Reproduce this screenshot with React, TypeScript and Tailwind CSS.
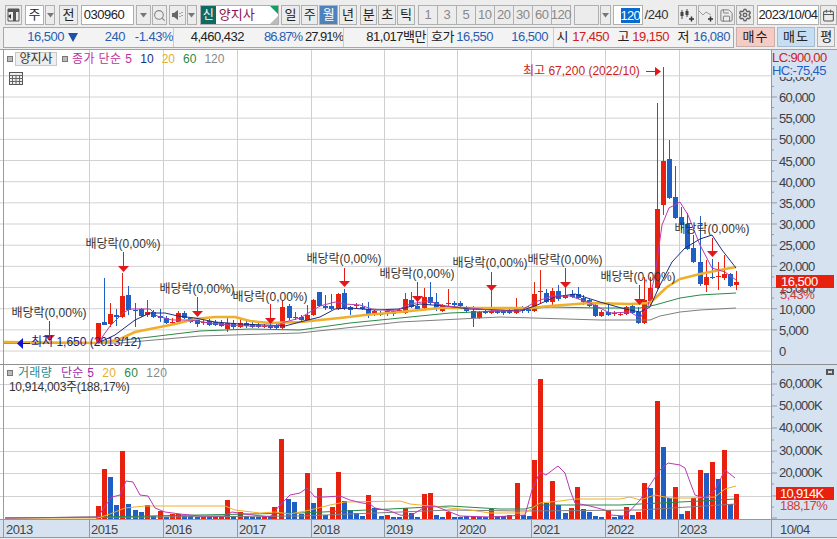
import { Search, Save, Settings, Calendar } from 'lucide-react';
import type { ReactNode } from 'react';

// [x, color, bodyTop, bodyBottom, wickTop, wickBottom]
type Candle = [number, 'r' | 'b', number, number, number, number];

const candles: Candle[] = [
  [98,'r',323,343,323,343],[104,'b',322,325,278,325],[110,'r',314,324,303,327],[116,'b',315,317,309,326],
  [122,'r',296,317,273,318],[128,'b',295,310,286,315],[135,'b',310,311,303,327],[141,'b',309,316,308,317],
  [147,'r',312,315,300,317],[153,'b',312,317,310,318],[160,'b',316,318,309,322],[166,'b',318,323,316,324],
  [172,'r',322,323,318,325],[178,'r',313,322,311,323],[184,'b',313,318,311,319],[190,'b',318,322,317,323],
  [197,'b',320,324,318,327],[203,'r',322,323,320,325],[209,'b',321,325,319,326],[215,'b',322,325,320,326],
  [221,'b',323,326,320,327],[227,'r',323,329,317,332],[233,'b',323,327,320,329],[240,'r',323,327,318,328],
  [246,'b',323,326,321,328],[252,'b',324,327,322,328],[258,'b',325,327,323,328],[264,'r',326,327,324,328],
  [270,'b',326,328,324,329],[276,'b',326,328,324,329],[282,'r',307,328,300,329],[289,'b',306,318,304,320],
  [295,'r',317,318,312,320],[301,'b',317,320,315,321],[307,'r',315,320,305,321],[313,'r',300,315,299,316],
  [319,'b',292,306,292,307],[325,'b',306,308,295,310],[331,'b',306,309,294,310],[338,'r',294,309,293,310],
  [344,'b',293,308,289,310],[350,'b',307,310,306,315],[356,'r',305,306,303,309],[362,'b',307,309,303,310],
  [368,'b',309,315,302,318],[374,'r',311,315,310,316],[380,'b',313,315,311,316],[387,'r',311,314,310,316],
  [393,'b',311,314,310,316],[399,'r',310,312,308,313],[405,'r',299,313,293,314],[411,'b',300,307,292,308],
  [417,'b',306,309,296,310],[424,'r',297,308,288,309],[430,'b',297,303,282,305],[436,'b',302,309,293,311],
  [442,'r',305,311,304,312],[448,'r',303,304,289,307],[454,'b',303,305,301,307],[460,'b',303,306,301,308],
  [466,'b',308,311,306,313],[473,'b',311,318,306,327],[479,'r',312,318,311,319],[485,'b',311,313,310,314],
  [491,'r',311,313,290,314],[497,'b',311,313,310,314],[503,'b',311,313,310,315],[509,'b',311,313,309,314],
  [516,'r',307,313,298,314],[522,'b',308,311,306,313],[528,'b',309,311,306,313],[534,'r',294,311,282,312],
  [540,'r',291,292,270,303],[546,'b',293,302,289,303],[552,'r',291,302,288,305],[558,'b',291,299,285,301],
  [565,'r',295,298,287,299],[572,'b',294,297,290,298],[578,'b',294,298,287,299],[583,'b',298,302,295,305],
  [589,'b',300,306,299,307],[595,'b',305,316,304,317],[601,'r',312,316,310,317],[608,'b',312,315,302,316],
  [614,'r',313,314,311,316],[620,'r',314,315,312,316],[626,'r',307,314,306,315],[632,'b',306,313,304,314],
  [638,'b',312,323,307,324],[644,'r',300,323,277,324],[650,'r',288,301,277,305],[657,'r',209,288,103,289],
  [663,'r',161,205,67,215],[669,'b',159,198,140,199],[675,'b',197,218,166,219],[681,'b',217,225,207,230],
  [687,'b',224,249,213,250],[693,'b',248,262,235,263],[700,'b',262,284,216,286],[706,'r',277,285,260,292],
  [712,'b',277,278,259,279],[718,'r',276,277,262,290],[724,'r',274,278,255,280],[730,'b',274,286,273,287],
  [736,'r',282,285,271,290],
];

const ma5 = '98,343 110,326 118,318 123,313 130,309 136,309 150,309 157,316 172,320 190,320 210,323 230,325 250,326 275,326 285,322 300,318 320,306 335,302 345,304 360,305 372,309 395,311 410,304 428,301 445,306 470,308 500,311 520,311 535,302 552,296 570,296 590,303 610,313 630,312 640,318 648,306 655,275 662,225 669,208 680,202 688,215 700,245 712,268 725,272 736,280';
const ma10 = '98,343 115,335 135,320 150,313 165,313 178,316 195,318 215,322 240,324 265,325 285,326 300,322 320,317 335,309 350,308 375,310 400,309 420,304 445,306 470,309 500,310 520,311 535,306 555,297 575,294 600,302 625,309 640,312 650,307 660,285 672,262 685,248 700,239 712,235 722,250 736,268';
const ma20 = '4,342 98,343 118,340 135,332 155,328 175,324 195,319 215,317 235,317 250,321 270,323 300,322 320,320 340,318 365,315 400,312 440,308 470,308 500,308 530,308 550,306 590,303 630,304 650,303 667,287 680,279 700,274 720,270 736,267';
const ma60 = '4,343 98,343 150,337 200,331 250,329 300,330 350,323 400,318 450,313 500,311 550,307 600,308 640,308 655,305 680,298 700,295 736,293';
const ma120 = '4,343 120,343 200,336 300,333 400,322 500,317 600,320 650,320 660,316 680,312 700,310 736,308';

// [x, color, top]
const bars: [number, 'r' | 'b', number][] = [
  [98,'r',506],[104,'r',469],[110,'b',477],[116,'b',505],[122,'r',451],[128,'b',504],[135,'b',510],[141,'b',512],
  [147,'r',505],[153,'b',516],[160,'r',511],[166,'b',517],[172,'r',514],[178,'r',514],[184,'b',516],[190,'b',516],
  [197,'b',517],[203,'r',517],[209,'b',517],[215,'r',517],[221,'r',516],[227,'r',500],[233,'b',516],[240,'r',512],
  [246,'b',516],[252,'b',517],[258,'b',517],[264,'r',516],[270,'b',516],[274,'r',507],[281,'r',439],[288,'b',499],
  [294,'b',502],[301,'b',514],[307,'r',473],[313,'b',503],[319,'r',488],[325,'b',515],[332,'r',507],[338,'r',472],
  [344,'b',501],[350,'b',510],[356,'b',513],[362,'b',516],[368,'r',495],[374,'b',508],[381,'b',516],[387,'r',515],
  [393,'b',517],[399,'b',517],[405,'r',508],[411,'b',513],[417,'b',517],[424,'r',494],[430,'r',493],[436,'b',515],
  [442,'b',517],[448,'r',512],[454,'b',517],[460,'b',517],[466,'b',516],[473,'r',516],[479,'b',517],[485,'b',517],
  [491,'r',509],[497,'b',516],[503,'b',516],[509,'r',515],[517,'r',483],[523,'b',515],[529,'b',516],[534,'r',460],
  [540,'r',379],[546,'b',503],[552,'r',481],[558,'b',505],[565,'b',513],[571,'r',508],[577,'r',487],[583,'b',509],
  [589,'b',512],[595,'b',516],[601,'b',517],[608,'r',510],[614,'b',517],[620,'b',516],[626,'r',507],[632,'b',515],
  [638,'r',512],[644,'r',483],[650,'b',488],[657,'r',401],[663,'b',447],[669,'b',498],[675,'r',487],[681,'b',514],
  [687,'r',511],[693,'r',498],[700,'r',470],[706,'b',473],[712,'r',462],[718,'b',479],[724,'r',450],[730,'b',504],
  [736,'r',494],
];

const vol5 = '5,518 98,517 105,506 112,497 120,495 126,481 133,482 140,495 148,496 155,508 165,512 180,514 200,516 224,516 232,512 245,514 270,517 280,505 290,495 300,493 307,488 315,497 325,497 340,496 350,500 362,503 370,504 375,508 390,511 400,515 410,516 425,507 435,506 445,510 460,516 490,517 509,516 525,515 532,490 540,472 546,475 558,466 565,473 570,490 575,503 590,506 605,510 610,515 625,516 640,500 650,485 660,470 668,463 680,465 685,468 690,482 695,495 705,498 715,490 725,470 735,478';
const vol20 = '5,518 98,518 110,514 125,508 145,506 225,506 235,510 260,513 275,512 290,514 310,510 330,505 345,502 400,501 410,504 440,507 470,510 490,513 510,513 525,513 540,503 560,501 575,499 620,499 630,497 640,500 655,495 670,498 690,498 715,497 725,489 736,486';
const vol60 = '5,518 98,517 300,513 390,509 450,506 500,509 525,509 540,505 620,505 660,503 700,501 736,499';
const vol120 = '5,518 300,516 400,512 450,510 520,511 640,510 736,504';

// [label center x, label center y, arrow x, shaft top, head top]
const dividends = [
  [49,313,49,321,335],[123,244,123,252,266],[197,289,197,297,311],[270,297,270,304,318],[344,259,344,268,281],
  [417,274,417,282,296],[490,263,491,272,285],[565,260,565,268,282],[638,277,639,285,299],[712,229,712,238,251],
];

const yearLines = [89, 163, 237, 311, 384, 457, 531, 605, 679];
const years = ['2015', '2016', '2017', '2018', '2019', '2020', '2021', '2022', '2023'];
const priceLabels = ['60,000','55,000','50,000','45,000','40,000','35,000','30,000','25,000','20,000','15,000','10,000','5,000','0'];
const priceY = (i: number) => 97 + i * 21.17;
const volLabels = ['60,000K','50,000K','40,000K','30,000K','20,000K'];
const volY = [384, 406, 428, 451, 473, 496];

const RED = '#e8210e';
const BLUE = '#1f5fc4';

const ToolBtn = ({ children, className = '', tone = 'bg-[#ececec] text-[#222]' }: { children?: ReactNode; className?: string; tone?: string }) => (
  <div className={`flex h-[20px] items-center justify-center border border-[#b0b0b0] text-[13px] ${tone} ${className}`}>
    {children}
  </div>
);

const Arrow = () => (
  <svg width="7" height="5" viewBox="0 0 7 5"><path d="M0 0h7L3.5 4.5z" fill="#777" /></svg>
);

const Toolbar = () => (
  <div className="flex h-[26px] items-center gap-px pl-[5px] pt-[4px]">
    <ToolBtn className="w-[17px]">
      <svg width="13" height="14" viewBox="0 0 13 14">
        <path d="M1 1h11v12H1z" fill="none" stroke="#555" />
        <path d="M1 1h11v3H1zM6 4h3v9H6z" fill="#555" />
        <path d="M1 8l3-2v5z" fill="#333" />
      </svg>
    </ToolBtn>
    <ToolBtn className="ml-[2px] w-[20px]" tone="bg-white text-[#222]">주</ToolBtn>
    <ToolBtn className="w-[10px]"><Arrow /></ToolBtn>
    <ToolBtn className="ml-[3px] w-[19px]">전</ToolBtn>
    <div className="ml-[2px] flex h-[20px] w-[54px] items-center border border-[#b0b0b0] bg-white pl-[2px] text-[13px] tracking-[-0.5px] text-[#222]">030960</div>
    <ToolBtn className="ml-px w-[15px]"><Arrow /></ToolBtn>
    <ToolBtn className="w-[16px]"><Search size={13} color="#888" strokeWidth={2} /></ToolBtn>
    <ToolBtn className="ml-px w-[17px]">
      <svg width="14" height="12" viewBox="0 0 14 12">
        <path d="M1 4h2l4-3v10L3 8H1z" fill="#666" />
        <path d="M9 4v1M9 7v1M11 3v1M11 6v1" stroke="#666" />
      </svg>
    </ToolBtn>
    <ToolBtn className="w-[10px]"><Arrow /></ToolBtn>
    <div className="relative ml-[2px] flex h-[20px] w-[81px] items-center border border-[#b0b0b0] bg-white text-[13px]">
      <span className="flex h-[18px] w-[15px] items-center justify-center bg-[#0f6b62] text-[12px] text-white">신</span>
      <span className="ml-[3px] text-[#8a1050]">양지사</span>
      <span className="absolute right-0 top-0 h-0 w-0 border-l-[8px] border-t-[8px] border-l-transparent border-t-[#12a060]" />
      <span className="absolute bottom-0 right-0 h-0 w-0 border-b-[8px] border-l-[8px] border-b-[#bbb] border-l-transparent" />
    </div>
    <ToolBtn className="ml-px w-[19px]">일</ToolBtn>
    <ToolBtn className="w-[18px]">주</ToolBtn>
    <ToolBtn className="w-[19px]" tone="bg-[#4f81bd] text-white">월</ToolBtn>
    <ToolBtn className="w-[18px]">년</ToolBtn>
    <ToolBtn className="ml-[2px] w-[18px]">분</ToolBtn>
    <ToolBtn className="w-[18px]">초</ToolBtn>
    <ToolBtn className="w-[18px]">틱</ToolBtn>
    <div className="ml-[3px] flex">
      {['1', '3', '5', '10', '20', '30', '60', '120'].map((n) => (
        <ToolBtn key={n} className="-ml-px w-[20px] tracking-[-0.5px]" tone="bg-[#ececec] text-[#888]">{n}</ToolBtn>
      ))}
    </div>
    <ToolBtn className="ml-[2px] w-[26px]" />
    <ToolBtn className="w-[11px]"><Arrow /></ToolBtn>
    <div className="ml-px flex h-[20px] w-[30px] items-center justify-end border border-[#b0b0b0] bg-white pr-[2px]">
      <span className="w-[19px] bg-[#0a6ad0] text-center text-[13px] leading-[15px] tracking-[-0.8px] text-white">120</span>
    </div>
    <span className="ml-px w-[33px] text-[13px] tracking-[-0.5px] text-[#333]">/240</span>
    <ToolBtn className="w-[19px]">
      <svg width="15" height="14" viewBox="0 0 15 14">
        <path d="M2 2v9M7 1v8" stroke="#444" />
        <path d="M0.5 4h3v4h-3zM5.5 3h3v4h-3z" fill="#444" />
        <path d="M9 11h5M11.5 8.500v5" stroke="#333" strokeWidth="1.500" />
      </svg>
    </ToolBtn>
    <ToolBtn className="w-[19px]">
      <svg width="15" height="14" viewBox="0 0 15 14">
        <path d="M0 3l4 4 3-3 5 3" fill="none" stroke="#999" />
        <path d="M9 11h5M11.500 8.500v5" stroke="#333" strokeWidth="1.500" />
      </svg>
    </ToolBtn>
    <ToolBtn className="w-[18px]"><Save size={15} color="#777" strokeWidth={1.5} /></ToolBtn>
    <ToolBtn className="w-[18px]"><Settings size={14} color="#666" strokeWidth={2.5} /></ToolBtn>
    <div className="ml-[2px] flex h-[20px] w-[64px] items-center justify-center border border-[#b0b0b0] bg-white text-[13px] tracking-[-0.6px] text-[#222]">2023/10/04</div>
    <ToolBtn className="w-[17px]"><Calendar size={13} color="#555" /></ToolBtn>
  </div>
);

const Cell = ({ w, children, className = '' }: { w: string; children: ReactNode; className?: string }) => (
  <span className={`whitespace-nowrap text-right ${w} ${className}`}>{children}</span>
);

const InfoRow = () => (
  <div className="flex h-[22px] items-center gap-[2px] pl-[3px] text-[13px] tracking-[-0.5px]">
    <div className="flex h-[21px] w-[731px] items-center border border-[#a8a8a8] bg-[#f3f3f3] text-[#222]">
      <Cell w="w-[60px]" className="text-[#2a5db0]">16,500</Cell>
      <svg className="ml-[4px]" width="10" height="9" viewBox="0 0 10 9"><path d="M0 0h10L5 9z" fill="#1f4fa8" /></svg>
      <Cell w="w-[47px]" className="text-[#2a5db0]">240</Cell>
      <Cell w="w-[48px]" className="text-[#2a5db0]">-1.43%</Cell>
      <span className="h-full w-px bg-[#ccc]" />
      <Cell w="w-[70px]">4,460,432</Cell>
      <Cell w="w-[58px]" className="tracking-[-1px] text-[#2a5db0]">86.87%</Cell>
      <Cell w="w-[41px]" className="tracking-[-1px]">27.91%</Cell>
      <span className="h-full w-px bg-[#ccc]" />
      <Cell w="w-[82px]">81,017백만</Cell>
      <span className="ml-px h-full w-px bg-[#ccc]" />
      <Cell w="w-[26px]">호가</Cell>
      <Cell w="w-[39px]" className="text-[#2a5db0]">16,550</Cell>
      <Cell w="w-[55px]" className="text-[#2a5db0]">16,500</Cell>
      <span className="ml-[5px] h-full w-px bg-[#ccc]" />
      <Cell w="w-[14px]">시</Cell>
      <Cell w="w-[41px]" className="text-[#d0201c]">17,450</Cell>
      <Cell w="w-[20px]">고</Cell>
      <Cell w="w-[40px]" className="text-[#d0201c]">19,150</Cell>
      <Cell w="w-[20px]">저</Cell>
      <Cell w="w-[41px]" className="text-[#2a5db0]">16,080</Cell>
    </div>
    <div className="flex h-[20px] w-[39px] items-center justify-center border border-[#c8b0ac] bg-[#f5cbc4] tracking-[1px] text-[#222]">매수</div>
    <div className="flex h-[20px] w-[38px] items-center justify-center border border-[#a8bccf] bg-[#c6def4] tracking-[1px] text-[#222]">매도</div>
    <div className="flex h-[20px] w-[18px] items-center justify-center border border-[#b0b0b0] bg-[#ececec] text-[#222]">평</div>
  </div>
);

const Line = ({ points, color, width = 1 }: { points: string; color: string; width?: number }) => (
  <polyline points={points} fill="none" stroke={color} strokeWidth={width} strokeLinejoin="round" />
);

const PricePlot = () => (
  <svg width="771" height="314" viewBox="0 50 771 314" className="block shrink-0">
    {[-1, 0, 1, 2, 3, 4, 5, 6, 7, 8, 9, 10, 11, 12].map((i) => (
      <line key={i} x1="0" x2="771" y1={priceY(i)} y2={priceY(i)} stroke="#d2d2d2" />
    ))}
    {yearLines.map((x) => <line key={x} x1={x + 0.5} x2={x + 0.5} y1="50" y2="364" stroke="#cfcfcf" />)}
    <line x1="3.500" x2="3.500" y1="50" y2="364" stroke="#9a9a9a" />
    {candles.map(([x, c, top, bot, hi, lo]) => {
      const col = c === 'r' ? RED : BLUE;
      return (
        <g key={x}>
          <line x1={x + 0.5} x2={x + 0.5} y1={hi} y2={lo} stroke={col} />
          <rect x={x - 2} y={top} width="5" height={Math.max(bot - top, 1)} fill={col} />
        </g>
      );
    })}
    <Line points={ma120} color="#7f7f7f" />
    <Line points={ma60} color="#2a8a45" />
    <Line points={ma20} color="#eeb02a" width={2.5} />
    <Line points={ma10} color="#1c2f80" />
    <Line points={ma5} color="#b83ab0" />
    {dividends.map(([tx, ty, ax, s, h]) => (
      <g key={tx}>
        <text x={tx} y={ty + 4} textAnchor="middle" fontSize="12" fill="#333">배당락(0,00%)</text>
        <line x1={ax + 0.5} x2={ax + 0.5} y1={s} y2={h} stroke="#e0181c" />
        <path d={`M${ax - 5} ${h}h11l-5.500 6z`} fill="#e0181c" />
      </g>
    ))}
    <text x="523" y="75" fontSize="12" fill="#c81e1e">최고 67,200 (2022/10)</text>
    <line x1="646" x2="656" y1="71.500" y2="71.500" stroke="#e0181c" />
    <path d="M655 67l6 4.500-6 4.500z" fill="#e0181c" />
    <text x="31" y="346" fontSize="12" fill="#1a1a90">최저 1,650 (2013/12)</text>
    <line x1="22" x2="30" y1="343.500" y2="343.500" stroke="#1010d0" />
    <path d="M23 338l-6 5.500 6 5.500z" fill="#1010d0" />
  </svg>
);

const PriceAxis = () => (
  <svg width="66" height="314" viewBox="771 50 66 314" className="block shrink-0 bg-[#d6e2ef]">
    <line x1="771.500" x2="771.500" y1="50" y2="364" stroke="#8f9aa6" />
    {Array.from({ length: 25 }, (_, i) => 97 - 21.17 + i * 10.585).map((y, i) => (
      <line key={i} x1="771" x2={i % 2 ? 774 : 777} y1={y} y2={y} stroke="#8f9aa6" />
    ))}
    {/* 65,000 is mostly covered by the LC/HC block */}
    <text x="779" y="81" fontSize="13" letterSpacing="-0.7" fill="#3a4048">65,000</text>
    <rect x="772" y="50" width="65" height="27" fill="#d6e2ef" />
    {priceLabels.map((t, i) => (
      <text key={t} x="779" y={priceY(i) + 5} fontSize="13" letterSpacing="-0.7" fill="#3a4048">{t}</text>
    ))}
    <text x="772" y="62" fontSize="13" letterSpacing="-0.6" fill="#d0201c">LC:900,00</text>
    <text x="772" y="75" fontSize="13" letterSpacing="-0.6" fill="#1f5fc4">HC:-75,45</text>
    <rect x="776" y="275" width="58" height="13" fill={RED} />
    <text x="781" y="286" fontSize="13" letterSpacing="-0.5" fill="#fff">16,500</text>
    <text x="780" y="299" fontSize="13" letterSpacing="-0.5" fill="#d0403c">5,43%</text>
  </svg>
);

const VolumePlot = () => (
  <svg width="771" height="154" viewBox="0 365 771 154" className="block shrink-0">
    {volY.map((y) => <line key={y} x1="0" x2="771" y1={y + 0.5} y2={y + 0.5} stroke="#d2d2d2" />)}
    {yearLines.map((x) => <line key={x} x1={x + 0.5} x2={x + 0.5} y1="365" y2="519" stroke="#cfcfcf" />)}
    <line x1="3.500" x2="3.500" y1="365" y2="519" stroke="#9a9a9a" />
    {bars.map(([x, c, top]) => (
      <rect key={x} x={x - 2} y={top} width="5" height={519 - top} fill={c === 'r' ? RED : BLUE} />
    ))}
    <Line points={vol120} color="#7f7f7f" />
    <Line points={vol60} color="#2a8a45" />
    <Line points={vol20} color="#eeb02a" />
    <Line points={vol5} color="#b83ab0" />
  </svg>
);

const VolumeAxis = () => (
  <svg width="66" height="154" viewBox="771 365 66 154" className="block shrink-0 bg-[#d6e2ef]">
    <line x1="771.500" x2="771.500" y1="365" y2="519" stroke="#8f9aa6" />
    {[372, 384, 395, 406, 417, 428, 440, 451, 462, 473, 484, 496, 507, 518].map((y, i) => (
      <line key={y} x1="771" x2={i % 2 ? 777 : 774} y1={y} y2={y} stroke="#8f9aa6" />
    ))}
    {volLabels.map((t, i) => (
      <text key={t} x="779" y={volY[i] + 4} fontSize="13" letterSpacing="-0.8" fill="#3a4048">{t}</text>
    ))}
    <rect x="826" y="369" width="8" height="6" fill="#555" />
    <path d="M828 371l4 2M832 371l-4 2" stroke="#fff" />
    <rect x="776" y="487" width="58" height="13" fill={RED} />
    <text x="780" y="498" fontSize="13" letterSpacing="-0.7" fill="#fff">10,914K</text>
    <text x="780" y="510" fontSize="13" letterSpacing="-0.6" fill="#d0403c">188,17%</text>
  </svg>
);

const Legend = ({ items }: { items: [string, string][] }) => (
  <>
    {items.map(([t, cls]) => <span key={t} className={cls}>{t}</span>)}
  </>
);

const Square = () => <span className="h-[6px] w-[6px] border border-[#777] bg-[#bbb]" />;

export default function App() {
  return (
    <div className="flex h-[539px] w-[837px] flex-col overflow-hidden bg-[#ededed] font-['Liberation_Sans','Noto_Sans_CJK_KR',sans-serif]">
      <Toolbar />
      <InfoRow />
      <div className="relative mt-px flex border-t border-[#a0a0a0] bg-white">
        <PricePlot />
        <PriceAxis />
        {/* legend sits on top of the plot */}
        <div className="absolute left-[7px] top-[2px] flex h-[14px] items-center gap-[5px] text-[12px]">
          <Square />
          <span className="-ml-[3px] flex h-[14px] w-[42px] items-center justify-center border border-[#c8c8c8] bg-[#eeeeee] text-[#333]">양지사</span>
          <Square />
          <Legend items={[
            ['종가 단순 5', '-ml-px tracking-[0.4px] text-[#c0309a]'],
            ['10', 'ml-[3px] text-[#1c2f80]'],
            ['20', 'ml-[3px] text-[#e0b030]'],
            ['60', 'ml-[3px] text-[#2a8a45]'],
            ['120', 'ml-[3px] text-[#888]'],
          ]} />
        </div>
        <div className="absolute left-[9px] top-[22px]">
          <svg width="14" height="13" viewBox="0 0 14 13">
            <rect x="0.500" y="0.500" width="13" height="12" fill="#eee" stroke="#555" />
            <path d="M0 3.500h14M0 6.500h14M0 9.500h14M3.500 3v10M7 3v10M10.500 3v10" stroke="#666" />
          </svg>
        </div>
      </div>
      <div className="relative flex border-t border-[#8f8f8f] bg-white">
        <VolumePlot />
        <VolumeAxis />
        <div className="absolute left-[7px] top-px flex h-[14px] items-center gap-[5px] text-[12px] tracking-[0.3px]">
          <Square />
          <Legend items={[
            ['거래량', 'text-[#2a8a8a]'],
            ['단순 5', 'ml-[4px] text-[#a030a8]'],
            ['20', 'ml-[3px] text-[#e0b030]'],
            ['60', 'ml-[3px] text-[#2a8a45]'],
            ['120', 'ml-[3px] text-[#888]'],
          ]} />
        </div>
        <span className="absolute left-[9px] top-[13px] text-[12px] tracking-[-0.3px] text-[#333]">10,914,003주(188,17%)</span>
      </div>
      <div className="flex h-[19px] border-y border-[#8f9aa6] bg-[#d6e2ef] text-[13px] tracking-[-0.6px] text-[#444]">
        <span className="ml-[3px] w-[86px] border-l border-[#8f9aa6] pl-[2px]">2013</span>
        {years.map((y, i) => (
          <span key={y} className={`border-l border-[#8f9aa6] pl-[1px] ${i === 8 ? 'w-[93px]' : i === 3 || i === 4 || i === 7 ? 'w-[73px]' : 'w-[74px]'}`}>{y}</span>
        ))}
        <span className="flex-1 border-l border-[#8f9aa6] pl-[8px]">10/04</span>
      </div>
    </div>
  );
}
